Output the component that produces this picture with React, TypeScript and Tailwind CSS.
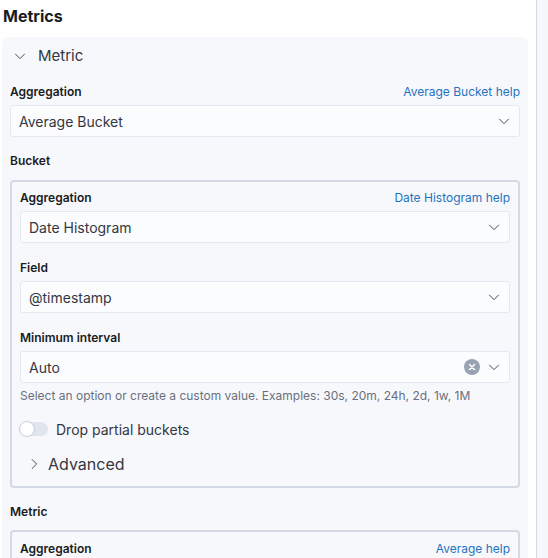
import React from "react";

const Chevron = ({ dir = "down", className = "" }: { dir?: "down" | "right"; className?: string }) => (
  <svg
    viewBox="0 0 16 16"
    className={className}
    fill="none"
    stroke="currentColor"
    strokeWidth={1.2}
    strokeLinecap="round"
    strokeLinejoin="round"
  >
    {dir === "down" ? <path d="M2 5.5l6 6 6-6" /> : <path d="M5.5 2l6 6-6 6" />}
  </svg>
);

const Label = ({ text, help }: { text: string; help?: string }) => (
  <div className="flex h-[18px] items-center justify-between">
    <span className="text-[12px] font-semibold text-[#1a1c21]">{text}</span>
    {help && <span className="text-[12px] text-[#1f74bd]">{help}</span>}
  </div>
);

const Select = ({ value, clear }: { value: string; clear?: boolean }) => (
  <div className="mt-1 flex h-8 items-center rounded-[3px] border border-[#e4e8f0] bg-[#fbfcfd] pl-2 pr-[9px]">
    <span className="flex-1 text-[14px] text-[#343741]">{value}</span>
    {clear && (
      <span className="mr-[8px] flex h-4 w-4 items-center justify-center rounded-full bg-[#98a2b3]">
        <svg viewBox="0 0 16 16" className="h-[8px] w-[8px]" stroke="white" strokeWidth={3} strokeLinecap="round">
          <path d="M3 3l10 10M13 3L3 13" />
        </svg>
      </span>
    )}
    <Chevron className="h-[12px] w-[12px] text-[#343741]" />
  </div>
);

export default function App() {
  return (
    <div
      className="flex h-[558px] w-[548px] overflow-hidden bg-white"
      style={{ fontFamily: "Inter, 'Noto Sans', sans-serif" }}
    >
      <div className="flex w-[536px] shrink-0 flex-col pl-[2px] pr-[8px]">
        <div className="flex h-[30px] shrink-0 items-end pb-[2px] pl-[1px]">
          <h2 className="text-[16px] font-bold leading-6 text-[#1a1c21]">Metrics</h2>
        </div>
        <div className="mt-[7px] shrink-0 rounded-t-[6px] bg-[#f7f8fc] px-2 pb-6 pt-[1px]">
          <div className="flex h-9 items-center pl-[4px]">
            <Chevron className="h-[12px] w-[12px] text-[#343741]" />
            <span className="ml-[12px] text-[15px] text-[#343741]">Metric</span>
          </div>
          <div className="mt-[9px]">
            <Label text="Aggregation" help="Average Bucket help" />
            <Select value="Average Bucket" />
          </div>
          <div className="mt-[15px]">
            <Label text="Bucket" />
          </div>
          <div className="mt-[10px] rounded-[4px] border-2 border-[#d3dae6] px-2 pb-[10px] pt-[7px]">
            <Label text="Aggregation" help="Date Histogram help" />
            <Select value="Date Histogram" />
            <div className="mt-4">
              <Label text="Field" />
              <Select value="@timestamp" />
            </div>
            <div className="mt-4">
              <Label text="Minimum interval" />
              <Select value="Auto" clear />
              <div className="mt-1 text-[12px] leading-[18px] text-[#69707d]">
                Select an option or create a custom value. Examples: 30s, 20m, 24h, 2d, 1w, 1M
              </div>
            </div>
            <div className="mt-[14px] flex h-5 items-center">
              <div className="relative h-[14px] w-[28px] rounded-full bg-[#e0e5ee]">
                <div className="absolute -left-[1px] -top-[1px] h-4 w-4 rounded-full border border-[#c5ccd8] bg-white" />
              </div>
              <span className="ml-[8px] text-[14px] text-[#343741]">Drop partial buckets</span>
            </div>
            <div className="mt-[13px] flex h-6 items-center pl-[8px]">
              <Chevron dir="right" className="h-[12px] w-[12px] text-[#343741]" />
              <span className="ml-[8px] text-[16px] text-[#343741]">Advanced</span>
            </div>
          </div>
          <div className="mt-[15px]">
            <Label text="Metric" />
          </div>
          <div className="mt-[9px] rounded-[4px] border-2 border-[#d3dae6] px-2 pt-[8px] pb-4">
            <Label text="Aggregation" help="Average help" />
            <Select value="Average" />
          </div>
        </div>
      </div>
      <div className="flex-1 border-l border-[#d3dae6] bg-[#f5f7fa]" />
    </div>
  );
}
